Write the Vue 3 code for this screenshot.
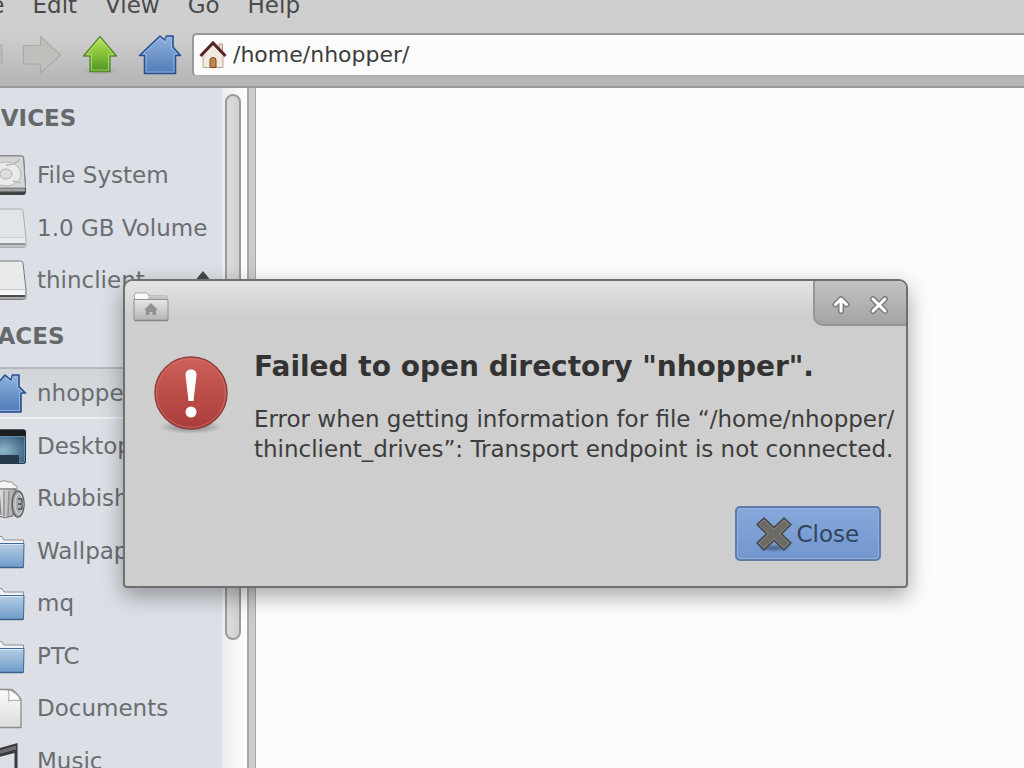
<template>
  <div class="window">
    <svg class="defs" width="0" height="0" aria-hidden="true">
      <defs>
        <linearGradient id="blue" x1="0" y1="0" x2="0" y2="1">
          <stop offset="0" stop-color="#8eb0de" />
          <stop offset="1" stop-color="#4f7bb8" />
        </linearGradient>
        <linearGradient id="green" x1="0" y1="0" x2="0" y2="1">
          <stop offset="0" stop-color="#b5e061" />
          <stop offset="0.45" stop-color="#8cc63c" />
          <stop offset="1" stop-color="#4c9320" />
        </linearGradient>
        <linearGradient id="folder" x1="0" y1="0" x2="0" y2="1">
          <stop offset="0" stop-color="#b5cde4" />
          <stop offset="1" stop-color="#6f9cc9" />
        </linearGradient>
        <linearGradient id="paper" x1="0" y1="0" x2="0" y2="1">
          <stop offset="0" stop-color="#fbfbfb" />
          <stop offset="1" stop-color="#dcdcdc" />
        </linearGradient>
        <linearGradient id="metal" x1="0" y1="0" x2="1" y2="0">
          <stop offset="0" stop-color="#f2f2f2" />
          <stop offset="1" stop-color="#a2a4a6" />
        </linearGradient>
        <linearGradient id="red" x1="0" y1="0" x2="0" y2="1">
          <stop offset="0" stop-color="#cd6059" />
          <stop offset="1" stop-color="#a93c39" />
        </linearGradient>
        <linearGradient id="grey" x1="0" y1="0" x2="0" y2="1">
          <stop offset="0" stop-color="#e6e6e6" />
          <stop offset="1" stop-color="#b4b4b4" />
        </linearGradient>
        <radialGradient id="screen" cx="0.4" cy="0.55" r="0.7">
          <stop offset="0" stop-color="#8fb8cb" />
          <stop offset="1" stop-color="#3c6283" />
        </radialGradient>
        <radialGradient id="shade">
          <stop offset="0" stop-color="#000" stop-opacity="0.4" />
          <stop offset="1" stop-color="#000" stop-opacity="0" />
        </radialGradient>
      </defs>
    </svg>

    <header class="top">
      <nav class="menubar">
        <button v-for="item in menus" :key="item" class="menu">{{ item }}</button>
      </nav>
      <div class="toolbar">
        <button class="tool" aria-label="Back">
          <svg width="40" height="44" viewBox="0 0 40 44">
            <path d="M38 12H22V3L1 22l21 18v-9h16z" fill="#babbb8" stroke="#a9aaa7" />
          </svg>
        </button>
        <button class="tool" aria-label="Forward">
          <svg width="40" height="44" viewBox="0 0 40 44">
            <path d="M1.500 12.500h17v-9l20 18.500-20 18v-9h-17z" fill="#bfc0bc" stroke="#a8aaa6" stroke-width="1.200" />
          </svg>
        </button>
        <button class="tool" aria-label="Up" @click="goUp">
          <svg width="40" height="44" viewBox="0 0 40 44">
            <ellipse cx="20" cy="38" rx="19" ry="4" fill="url(#shade)" opacity="0.5" />
            <path d="M20 3.500l16.500 19.500H30v15.500H10V23H3.500z" fill="url(#green)" stroke="#5a8a33" stroke-width="1.300" stroke-linejoin="round" />
            <path d="M20 5.800L33 21.700h-4.500v15.300h-17V21.700H7z" fill="none" stroke="#d3f08f" stroke-opacity="0.600" />
          </svg>
        </button>
        <button class="tool" aria-label="Home" @click="path = home">
          <svg width="44" height="44" viewBox="0 0 44 44">
            <path d="M22 3l5 4 1.500-4H35v11l7.500 8.500H37.500v18h-31v-18H1.500z" fill="url(#blue)" stroke="#284f90" stroke-width="1.600" stroke-linejoin="round" />
            <path d="M22 5.500l6 5V5h5.500v10l5.500 6h-3v18H8V21H5z" fill="none" stroke="#b6cdec" stroke-opacity="0.600" />
          </svg>
        </button>
        <label class="location">
          <svg width="28" height="30" viewBox="0 0 28 30">
            <path d="M20 4h3.500v9H20z" fill="#e6dccb" stroke="#b69a7d" />
            <path d="M4 14L14 4l10 10v13.500H4z" fill="#f0e9df" stroke="#bfa68c" />
            <path d="M1.500 16L14 3l12.500 13" fill="none" stroke="#592225" stroke-width="3" />
            <path d="M11 27.500V20q0-2.500 3-2.500t3 2.500v7.500z" fill="#c08a4b" stroke="#7c4a22" />
          </svg>
          <input v-model="path" type="text" aria-label="Location" spellcheck="false" />
        </label>
      </div>
    </header>

    <div class="body">
      <aside class="sidebar">
        <section v-for="group in groups" :key="group.title">
          <h2>{{ group.title }}</h2>
          <ul>
            <li v-for="place in group.places" :key="place.name" :class="{ selected: place.name === selected }">
              <a href="#" @click.prevent="selected = place.name">
                <svg width="38" height="44" viewBox="0 0 38 44">
                  <g v-if="place.icon === 'disk'">
                    <path d="M0 2.500h32.500q2 0 2.500 2L37 35v4q0 3-3 3H0z" fill="#3f4143" />
                    <path d="M0 3h32q2 0 2.500 2L36.500 35H0z" fill="#d5d6d7" stroke="#85878a" />
                    <path d="M0 35.500h36v3H0z" fill="#9fa1a3" />
                    <ellipse cx="17" cy="21" rx="15" ry="12" fill="#e9eaeb" stroke="#b4b6b8" />
                    <ellipse cx="17" cy="21" rx="6" ry="5" fill="#dcddde" stroke="#adafb1" />
                    <path d="M17 12q10 0 13-6M24 28l8 2" fill="none" stroke="#b4b6b8" stroke-width="1.500" />
                  </g>
                  <g v-else-if="place.icon === 'volume' || place.icon === 'mounted'" :opacity="place.icon === 'volume' ? 0.5 : 1">
                    <path d="M0 3h31.500q2 0 2.500 2l3 27v7q0 2.500-2.500 2.500H0z" fill="#e9eaeb" stroke="#77797c" />
                    <path d="M0 31.500h36" stroke="#c3c5c7" />
                    <path d="M0 32h36v5H0z" fill="#f6f6f6" />
                    <path d="M0 37h36.500v2q0 2-2 2H0z" fill="#a6a8aa" />
                    <path d="M0 38h36" stroke="#4a4c4e" stroke-width="2" />
                  </g>
                  <g v-else-if="place.icon === 'home'">
                    <path d="M16 4l6 5 1.500-5H30v11.500l6.500 6.500H32v19H2V22H0z" fill="url(#blue)" stroke="#284f90" stroke-width="1.600" stroke-linejoin="round" />
                    <path d="M16 6.500l7.500 5V6h5v10l4.500 5h-2.500v18.500H3" fill="none" stroke="#b6cdec" stroke-opacity="0.600" />
                  </g>
                  <g v-else-if="place.icon === 'desktop'">
                    <path d="M0 5.500h34q3 0 3 3v29q0 2.500-3 2.500H0z" fill="#24384c" />
                    <path d="M0 5.500h34q3 0 3 3V12H0z" fill="#1c1d1f" />
                    <path d="M0 12.500h35.500V37q0 1.500-2 1.500H0z" fill="url(#screen)" stroke="#8fb3cc" stroke-opacity="0.600" />
                    <path d="M0 31h30v8H0z" fill="#26394d" />
                  </g>
                  <g v-else-if="place.icon === 'trash'">
                    <path d="M4 13q-3-4 2-5 1-3 5-2 4-3 8 0 5-1 6 3 4 0 3 4z" fill="#f4f4f4" stroke="#8a8c8e" />
                    <path d="M5 13h22l-3 27q-8 3-16 0z" fill="url(#metal)" stroke="#6d6f71" />
                    <path d="M10 15l2 24M15 15v25M20 15l-1 25" stroke="#8b8d90" stroke-width="1.500" />
                    <ellipse cx="29" cy="28" rx="6" ry="13" fill="#a8abad" stroke="#5c5e61" stroke-width="1.500" />
                    <ellipse cx="30" cy="28" rx="4" ry="10" fill="none" stroke="#dadcdd" />
                    <path d="M29 23h4v10h-4M29 28h3" fill="none" stroke="#4d4f52" stroke-width="1.300" />
                  </g>
                  <g v-else-if="place.icon === 'folder'">
                    <path d="M0 7.500h13l2 3.500h19.500V37H0z" fill="#f1f2f3" stroke="#8c9094" />
                    <path d="M0 14.500h35l-.5 24H0z" fill="url(#folder)" stroke="#416b96" />
                    <path d="M0 15.500h34" stroke="#dce8f3" />
                    <path d="M0 38.500h34" stroke="#3c6189" stroke-width="1.500" />
                  </g>
                  <g v-else-if="place.icon === 'document'">
                    <path d="M0 3.500h22q4 1 10 10v28H0z" fill="url(#paper)" stroke="#8b8d8f" stroke-width="1.300" />
                    <path d="M19 4q2 5 .5 11 5-1.500 12-.5Q28 6 19 4z" fill="#fdfdfd" stroke="#a3a5a7" />
                  </g>
                  <g v-else fill="#37393b">
                    <path d="M7 10l21.500-6v32q0 4-5 4.500-5 0-5-4 1-4 7-4V14L10 18v22H7z" />
                    <path d="M8 12l19-5.500v4L8 15.500z" fill="#6d6f71" />
                    <ellipse cx="4" cy="40" rx="6" ry="4" />
                  </g>
                </svg>
                <span>{{ place.name }}</span>
              </a>
              <button v-if="place.icon === 'mounted'" class="eject" aria-label="Eject">
                <svg width="20" height="20" viewBox="0 0 20 20">
                  <path d="M10 1l9 11H1zM1 15h18v4H1z" fill="#45474a" />
                </svg>
              </button>
            </li>
          </ul>
        </section>
      </aside>
      <div class="scrollbar"><div class="thumb"></div></div>
      <div class="divider"></div>
      <main class="files"></main>
    </div>
  </div>

  <div v-if="open" class="dialog" role="alertdialog" aria-labelledby="dialog-title" aria-describedby="dialog-text">
    <div class="titlebar">
      <svg width="36" height="30" viewBox="0 0 36 30">
        <path d="M1.500 27V3q0-2 2-2h10q2 0 2.500 3h18v22z" fill="#fafafa" stroke="#a5a5a5" />
        <path d="M15 4.500h20v4H15z" fill="#c4c4c4" />
        <path d="M1 7.500h34v20q0 1-1 1H2q-1 0-1-1z" fill="url(#grey)" stroke="#8f8f8f" />
        <path d="M1.500 28.500h33" stroke="#858585" stroke-width="1.500" />
        <path d="M18 11l7 7h-2v5h-3.500v-3h-3v3H13v-5h-2z" fill="#929292" />
      </svg>
      <div class="controls">
        <button aria-label="Shade">
          <svg width="20" height="20" viewBox="0 0 20 20">
            <path d="M10 16V5M4.500 9.500L10 4l5.500 5.500" class="outline" />
            <path d="M10 16V5M4.500 9.500L10 4l5.500 5.500" class="stroke" />
          </svg>
        </button>
        <button aria-label="Close window" @click="open = false">
          <svg width="20" height="20" viewBox="0 0 20 20">
            <path d="M4 4l12 12M16 4L4 16" class="outline" />
            <path d="M4 4l12 12M16 4L4 16" class="stroke" />
          </svg>
        </button>
      </div>
    </div>
    <div class="message">
      <svg class="error" width="76" height="80" viewBox="0 0 76 80">
        <ellipse cx="38" cy="72" rx="32" ry="7" fill="url(#shade)" />
        <circle cx="38" cy="38" r="36" fill="url(#red)" stroke="#8f3d3c" stroke-width="1.500" />
        <circle cx="38" cy="38" r="34.500" fill="none" stroke="#e08a84" stroke-opacity="0.500" />
        <path d="M32.500 20q0-5.500 5.500-5.500t5.500 5.500L40.500 46h-5z" fill="#fff" />
        <circle cx="38" cy="57" r="5.500" fill="#fff" />
      </svg>
      <div class="text">
        <h1 id="dialog-title">Failed to open directory "nhopper".</h1>
        <p id="dialog-text">
          Error when getting information for file “/home/nhopper/<br />thinclient_drives”: Transport endpoint is not connected.
        </p>
      </div>
    </div>
    <div class="actions">
      <button class="close" @click="open = false">
        <svg width="38" height="36" viewBox="0 0 38 36">
          <ellipse cx="19" cy="32" rx="17" ry="4" fill="url(#shade)" />
          <path d="M9 2l10 9.500L29 2l7 6.500L26.500 18l9.500 9-7 7-10-9.500L9 34l-7-7 9.500-9L2 8.500z" fill="#6b6a66" stroke="#45474a" stroke-width="1.500" stroke-linejoin="round" />
          <path d="M9 4l10 9.500L29 4l5 4.500L24.500 18l9.500 9-5 5-10-9.500L9 32l-5-5 9.500-9L4 8.500z" fill="none" stroke="#94928c" stroke-opacity="0.700" />
        </svg>
        Close
      </button>
    </div>
  </div>
</template>

<script setup>
import { ref } from "vue";

const menus = ["File", "Edit", "View", "Go", "Help"];

const home = "/home/nhopper/";
const path = ref(home);
const selected = ref("nhopper");
const open = ref(true);

const groups = [
  {
    title: "DEVICES",
    places: [
      { name: "File System", icon: "disk" },
      { name: "1.0 GB Volume", icon: "volume" },
      { name: "thinclient", icon: "mounted" },
    ],
  },
  {
    title: "PLACES",
    places: [
      { name: "nhopper", icon: "home" },
      { name: "Desktop", icon: "desktop" },
      { name: "Rubbish", icon: "trash" },
      { name: "Wallpapers", icon: "folder" },
      { name: "mq", icon: "folder" },
      { name: "PTC", icon: "folder" },
      { name: "Documents", icon: "document" },
      { name: "Music", icon: "music" },
    ],
  },
];

const goUp = () => {
  path.value = path.value.replace(/[^/]+\/$/, "");
};
</script>

<style>
body {
  overflow: hidden;
  background: #cecece;
}
</style>

<style scoped>
.window,
.dialog {
  font-family: "DejaVu Sans", sans-serif;
  font-size: 23px;
  line-height: 30px;
  color: #3c3c3c;
}

/* the window hangs over the top left corner of the screen */
.window {
  display: flex;
  flex-direction: column;
  height: calc(100vh + 10px);
  margin: -10px 0 0 -34px;
  overflow: hidden;
}

.defs {
  position: absolute;
}

button {
  padding: 0;
  border: none;
  background: none;
  font: inherit;
  color: inherit;
}

svg {
  display: block;
  flex: none;
}

.top {
  flex: none;
  border-bottom: 2px solid #989898;
  background: linear-gradient(#d0d0d0, #cdcdcd 50%, #b4b4b4);
}

.menubar {
  display: flex;
  gap: 28px;
  color: #4a4a4a;
}

.toolbar {
  display: flex;
  align-items: center;
  gap: 18px;
  padding: 13px 0 9px;
}

.tool:first-child {
  margin-left: -2px;
}

.location {
  flex: 1;
  display: flex;
  align-items: center;
  gap: 6px;
  height: 40px;
  margin-left: -8px;
  padding-left: 5px;
  border: 2px solid #999;
  border-right: none;
  border-bottom-color: #b0b0b0;
  border-radius: 5px 0 0 5px;
  background: #fcfcfc;
}

.location input {
  flex: 1;
  min-width: 0;
  padding: 0;
  border: none;
  outline: none;
  background: none;
  font: inherit;
  font-size: 22px;
  color: inherit;
}

.body {
  flex: 1;
  display: flex;
  min-height: 0;
}

.sidebar {
  flex: none;
  width: 256px;
  overflow: hidden;
  background: #dce0e6;
  color: #6a6d71;
}

h2 {
  margin: 0;
  font-size: 23px;
  line-height: 61px;
  color: #66696c;
}

ul {
  margin: 0;
  padding: 0;
  list-style: none;
}

li {
  display: flex;
  align-items: center;
  box-sizing: border-box;
  height: 52px;
  padding: 0 9px 0 23px;
}

li:nth-child(even) {
  height: 53px;
}

li.selected {
  border-top: 2px solid #b3b7bc;
  border-bottom: 2px solid #eceff2;
  background: linear-gradient(#d1d5da, #dadee3);
}

li a {
  flex: 1;
  display: flex;
  align-items: center;
  gap: 10px;
  color: inherit;
  text-decoration: none;
  white-space: nowrap;
}

.scrollbar {
  flex: none;
  box-sizing: border-box;
  width: 25px;
  padding: 6px 5px 0 3px;
  border-right: 1px solid #fff;
  background: linear-gradient(90deg, #ececec, #fdfdfd);
}

.thumb {
  box-sizing: border-box;
  height: 81%;
  border: 2px solid #9b9b9b;
  border-radius: 8px;
  background: linear-gradient(90deg, #dcdcdc, #d0d0d0);
}

.divider {
  flex: none;
  box-sizing: border-box;
  width: 9px;
  border: 1px solid #a8a8a8;
  border-width: 0 1px 0 2px;
  background: #cbcbcb;
}

.files {
  flex: 1;
  background: #fcfcfc;
}

.dialog {
  position: absolute;
  top: 279px;
  left: 123px;
  box-sizing: border-box;
  border: 2px solid #6f6f6f;
  border-radius: 9px 9px 4px 4px;
  background: linear-gradient(#e4e4e4, #cecece 36px);
  box-shadow: 0 8px 22px rgba(0, 0, 0, 0.35);
}

.titlebar {
  display: flex;
  justify-content: space-between;
  align-items: center;
  padding-left: 8px;
}

.titlebar > svg {
  margin-top: 6px;
}

.controls {
  display: flex;
  box-sizing: border-box;
  height: 45px;
  padding: 4px 17px 0 16px;
  gap: 18px;
  border: 2px solid #969696;
  border-width: 0 0 2px 2px;
  border-radius: 0 7px 0 10px;
  background: linear-gradient(#c3c3c3, #a4a4a4);
}

.controls path {
  fill: none;
  stroke-linecap: round;
  stroke-linejoin: round;
}

.outline {
  stroke: #7c7c7c;
  stroke-width: 6;
}

.stroke {
  stroke: #fff;
  stroke-width: 3;
}

.message {
  display: flex;
  gap: 25px;
  padding: 25px 12px 0 28px;
}

.error {
  margin-top: 4px;
}

h1 {
  margin: 0 0 21px;
  font-size: 28px;
  line-height: 32px;
  color: #333;
}

p {
  margin: 0;
  white-space: nowrap;
}

.actions {
  display: flex;
  justify-content: flex-end;
  padding: 42px 25px 25px;
}

.close {
  display: flex;
  align-items: center;
  gap: 4px;
  height: 55px;
  padding: 0 20px 0 18px;
  border: 2px solid #5c7ba6;
  border-radius: 5px;
  background: linear-gradient(#86a8dc, #7196cd);
  box-shadow: inset 0 0 0 1px #8fb0e0;
  color: #34435a;
}
</style>
